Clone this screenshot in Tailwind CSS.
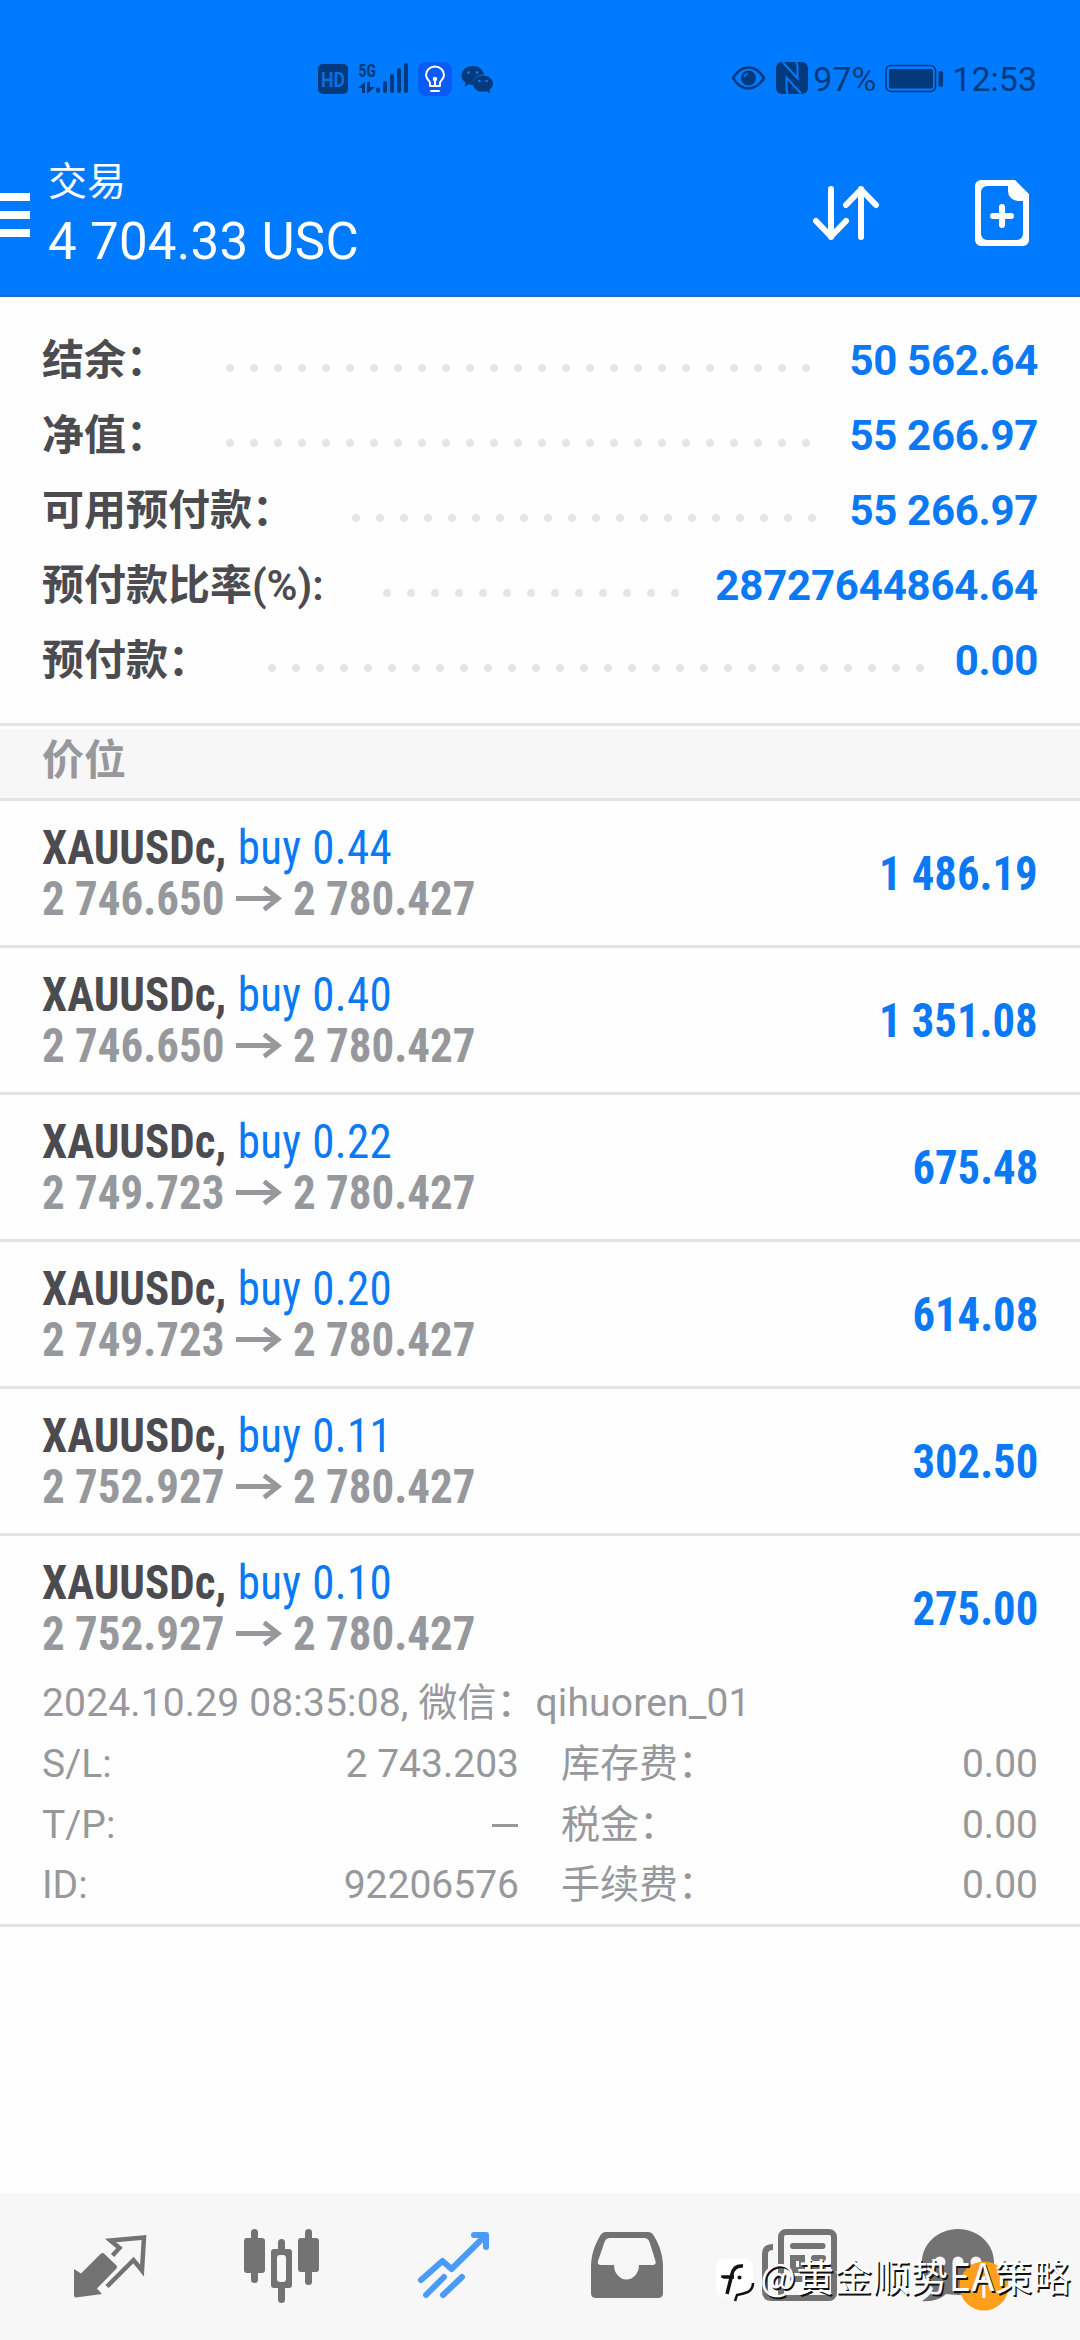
<!DOCTYPE html>
<html lang="zh-CN">
<head>
<meta charset="utf-8">
<title>交易</title>
<script src="https://cdn.jsdelivr.net/npm/@tailwindcss/browser@4"></script>
</head>
<body class="bg-white">
<div class="relative flex h-[2340px] w-[1080px] flex-col overflow-hidden bg-[#fefefe] font-['Roboto','Noto_Sans_CJK_SC',sans-serif]">

  <!-- Header -->
  <header class="h-[297px] border-b-2 border-[#1f6cbe] bg-[#007aff]">
    <div class="flex h-[158px] items-start justify-between pr-[43px] pl-[318px] text-[#043a7c]">
      <svg class="mt-[60px] h-[40px] w-[180px]" viewBox="318 60 180 40" fill="#043a7c">
        <rect x="318" y="64" width="30" height="30" rx="5"/>
        <text x="333" y="86.500" text-anchor="middle" font-family="Roboto" font-weight="700" font-size="20" textLength="24" lengthAdjust="spacingAndGlyphs" fill="#0a6fe2">HD</text>
        <text x="358.500" y="76.500" font-family="Roboto Condensed" font-weight="700" font-size="19" textLength="17.500" lengthAdjust="spacingAndGlyphs">5G</text>
        <path d="M358 88l7-6v11h-3v-5zM367 82h3v5h5l-8 7z"/>
        <g stroke="#043a7c" stroke-width="4" stroke-linecap="round"><path d="M378 89.500v1.500M385 83v8M392 76v15M399 70v21M406 65v26"/></g>
        <rect x="418" y="62" width="34" height="34" rx="8" fill="#0a5af5"/>
        <g fill="none" stroke="#fff" stroke-width="2" stroke-linecap="round" stroke-linejoin="round"><path d="M430 86v-3c0-2-4-4-4-8a9 8.500 0 0 1 18 0c0 4-4 6-4 8v3zM431 91h8M435 80v6"/></g>
        <circle cx="435" cy="79" r="2.200" fill="#fff"/>
        <path d="M473 66c-6.500 0-11.500 4.200-11.500 9.500 0 3 1.600 5.400 4.200 7.200l-1.200 3.800 4.500-2.300c1.400.3 2.700.6 4 .6-.6-6 4.600-10.600 11-10.300C483 69.500 478.500 66 473 66z"/>
        <path d="M483 75.500c-5.700 0-10 3.700-10 8.200s4.300 8 10 8c1.200 0 2.300-.2 3.400-.5l3.600 2-.8-3.300c2.400-1.700 3.800-3.700 3.800-6.200 0-4.500-4.300-8.200-10-8.200z"/>
        <g fill="#007aff"><circle cx="468.500" cy="72.500" r="1.500"/><circle cx="477" cy="72.500" r="1.500"/><circle cx="479.500" cy="81" r="1.300"/><circle cx="486.500" cy="81" r="1.300"/></g>
      </svg>
      <div class="mt-[60px] flex h-[40px] items-center">
        <svg class="h-[40px] w-[80px]" viewBox="732 60 80 40">
          <path d="M733 78c4-6.500 9.500-10.500 15.500-10.500S760 71.500 764 78c-4 6.500-9.500 10.500-15.500 10.500S737 84.500 733 78z" fill="none" stroke="#043a7c" stroke-width="2.500"/>
          <circle cx="748.500" cy="78" r="7.500" fill="#043a7c"/><path d="M744.500 77a4 4 0 0 1 3.500-3.300" fill="none" stroke="#007aff" stroke-width="1.500"/>
          <rect x="776" y="62" width="32" height="32" rx="6" fill="#043a7c"/>
          <path d="M783 62.500l14.500 16v-12q0-2.500-1.500-4.500M801 93.500l-14.500-16v12q0 2.500 1.500 4.500" fill="none" stroke="#007aff" stroke-width="2"/>
        </svg>
        <span class="mb-[2px] ml-[1px] w-[72px] text-[34px] leading-[38px]">97%</span>
        <svg class="h-[40px] w-[67px]" viewBox="885 60 67 40">
          <rect x="886" y="65.500" width="49.500" height="26" rx="5" fill="none" stroke="#043a7c" stroke-width="1.600"/>
          <rect x="889" y="69" width="44" height="19.500" rx="2" fill="#043a7c"/>
          <rect x="938.500" y="71" width="4.500" height="16" rx="2" fill="#043a7c"/>
        </svg>
        <span class="mb-[2px] text-[34px] leading-[38px]">12:53</span>
      </div>
    </div>
    <div class="flex items-start text-white">
      <svg class="mt-[35px] h-[44px] w-[30px]" viewBox="0 193 30 44" fill="#fff"><path d="M0 193h30v8H0zM0 211h30v8H0zM0 229h30v8H0z"/></svg>
      <div class="ml-[18px]">
        <div class="text-[39px] leading-[48px]">交易</div>
        <div class="mt-[6px] text-[51px] leading-[60px] tracking-[0.3px]">4 704.33 USC</div>
      </div>
      <svg class="mt-[22px] ml-auto h-[66px] w-[267px]" viewBox="813 180 267 66" fill="none" stroke="#fff" stroke-width="6" stroke-linecap="round" stroke-linejoin="round">
        <path d="M831 189v48M816 221l15 15.500L846 221M861 237v-48M846 205l15-15.500L876 205"/>
        <path d="M1002 207v18M993 216h18"/>
        <path fill="#fff" fill-rule="evenodd" stroke="none" d="M981 180h34l14 14v46a6 6 0 0 1-6 6h-42a6 6 0 0 1-6-6v-54a6 6 0 0 1 6-6zM1008 186h-21a6 6 0 0 0-6 6v42a6 6 0 0 0 6 6h30a6 6 0 0 0 6-6v-33h-5a10 10 0 0 1-10-10z"/>
      </svg>
    </div>
  </header>

  <!-- Account summary -->
  <section class="h-[426px] pt-[26px] pr-[42px] pl-[42px] text-[42px] leading-[75px] font-bold text-[#4b4b50]">
    <div class="flex h-[75px]"><span class="w-[176px]">结余：</span><span class="mt-[33px] h-[24px] w-[600px] bg-[radial-gradient(circle,#e5e5e5_3.700px,transparent_4.300px)] bg-[length:24px_24px]"></span><span class="ml-auto tracking-[-0.3px] text-[#0b79f3]">50 562.64</span></div>
    <div class="flex h-[75px]"><span class="w-[176px]">净值：</span><span class="mt-[33px] h-[24px] w-[600px] bg-[radial-gradient(circle,#e5e5e5_3.700px,transparent_4.300px)] bg-[length:24px_24px]"></span><span class="ml-auto tracking-[-0.3px] text-[#0b79f3]">55 266.97</span></div>
    <div class="flex h-[75px]"><span class="w-[302px]">可用预付款：</span><span class="mt-[33px] h-[24px] w-[480px] bg-[radial-gradient(circle,#e5e5e5_3.700px,transparent_4.300px)] bg-[length:24px_24px]"></span><span class="ml-auto tracking-[-0.3px] text-[#0b79f3]">55 266.97</span></div>
    <div class="flex h-[75px]"><span class="w-[333px]">预付款比率<span class="font-semibold">(%):</span></span><span class="mt-[33px] h-[24px] w-[312px] bg-[radial-gradient(circle,#e5e5e5_3.700px,transparent_4.300px)] bg-[length:24px_24px]"></span><span class="ml-auto tracking-[-0.2px] text-[#0b79f3]">28727644864.64</span></div>
    <div class="flex h-[75px]"><span class="w-[218px]">预付款：</span><span class="mt-[33px] h-[24px] w-[672px] bg-[radial-gradient(circle,#e5e5e5_3.700px,transparent_4.300px)] bg-[length:24px_24px]"></span><span class="ml-auto tracking-[-0.3px] text-[#0b79f3]">0.00</span></div>
  </section>

  <div class="border-y-[3px] border-[#e4e4e4] pt-[3px]">
    <div class="h-[69px] bg-[#f7f7f7] pl-[42px] text-[42px] leading-[63px] font-bold text-[#97989c]">价位</div>
  </div>

  <!-- Positions -->
  <main class="font-['Roboto_Condensed','Noto_Sans_CJK_SC',sans-serif] text-[48px] leading-[51px] font-bold text-[#97989c]">
    <div class="flex h-[147px] items-center justify-between border-b-[3px] border-[#e4e4e4] px-[42px] pt-[21px] pb-[21px]">
      <div class="origin-left scale-x-[0.937]">
        <div class="text-[#4b4b50]">XAUUSDc, <span class="ml-[1px] font-normal tracking-[0.4px] text-[#0b79f3]">buy 0.44</span></div>
        <div class="flex items-center">2 746.650<svg class="mx-[12px] h-[26px] w-[49px]" viewBox="0 0 49 26" fill="none" stroke="#97989c" stroke-width="5"><path d="M0 12.500h45M30 1.500l15 11-15 11"/></svg>2 780.427</div>
      </div>
      <div class="origin-right scale-x-93 text-[#0b79f3]">1 486.19</div>
    </div>
    <div class="flex h-[147px] items-center justify-between border-b-[3px] border-[#e4e4e4] px-[42px] pt-[21px] pb-[21px]">
      <div class="origin-left scale-x-[0.937]">
        <div class="text-[#4b4b50]">XAUUSDc, <span class="ml-[1px] font-normal tracking-[0.4px] text-[#0b79f3]">buy 0.40</span></div>
        <div class="flex items-center">2 746.650<svg class="mx-[12px] h-[26px] w-[49px]" viewBox="0 0 49 26" fill="none" stroke="#97989c" stroke-width="5"><path d="M0 12.500h45M30 1.500l15 11-15 11"/></svg>2 780.427</div>
      </div>
      <div class="origin-right scale-x-93 text-[#0b79f3]">1 351.08</div>
    </div>
    <div class="flex h-[147px] items-center justify-between border-b-[3px] border-[#e4e4e4] px-[42px] pt-[21px] pb-[21px]">
      <div class="origin-left scale-x-[0.937]">
        <div class="text-[#4b4b50]">XAUUSDc, <span class="ml-[1px] font-normal tracking-[0.4px] text-[#0b79f3]">buy 0.22</span></div>
        <div class="flex items-center">2 749.723<svg class="mx-[12px] h-[26px] w-[49px]" viewBox="0 0 49 26" fill="none" stroke="#97989c" stroke-width="5"><path d="M0 12.500h45M30 1.500l15 11-15 11"/></svg>2 780.427</div>
      </div>
      <div class="origin-right scale-x-93 text-[#0b79f3]">675.48</div>
    </div>
    <div class="flex h-[147px] items-center justify-between border-b-[3px] border-[#e4e4e4] px-[42px] pt-[21px] pb-[21px]">
      <div class="origin-left scale-x-[0.937]">
        <div class="text-[#4b4b50]">XAUUSDc, <span class="ml-[1px] font-normal tracking-[0.4px] text-[#0b79f3]">buy 0.20</span></div>
        <div class="flex items-center">2 749.723<svg class="mx-[12px] h-[26px] w-[49px]" viewBox="0 0 49 26" fill="none" stroke="#97989c" stroke-width="5"><path d="M0 12.500h45M30 1.500l15 11-15 11"/></svg>2 780.427</div>
      </div>
      <div class="origin-right scale-x-93 text-[#0b79f3]">614.08</div>
    </div>
    <div class="flex h-[147px] items-center justify-between border-b-[3px] border-[#e4e4e4] px-[42px] pt-[21px] pb-[21px]">
      <div class="origin-left scale-x-[0.937]">
        <div class="text-[#4b4b50]">XAUUSDc, <span class="ml-[1px] font-normal tracking-[0.4px] text-[#0b79f3]">buy 0.11</span></div>
        <div class="flex items-center">2 752.927<svg class="mx-[12px] h-[26px] w-[49px]" viewBox="0 0 49 26" fill="none" stroke="#97989c" stroke-width="5"><path d="M0 12.500h45M30 1.500l15 11-15 11"/></svg>2 780.427</div>
      </div>
      <div class="origin-right scale-x-93 text-[#0b79f3]">302.50</div>
    </div>
    <div class="flex h-[144px] items-center justify-between px-[42px] pt-[21px] pb-[21px]">
      <div class="origin-left scale-x-[0.937]">
        <div class="text-[#4b4b50]">XAUUSDc, <span class="ml-[1px] font-normal tracking-[0.4px] text-[#0b79f3]">buy 0.10</span></div>
        <div class="flex items-center">2 752.927<svg class="mx-[12px] h-[26px] w-[49px]" viewBox="0 0 49 26" fill="none" stroke="#97989c" stroke-width="5"><path d="M0 12.500h45M30 1.500l15 11-15 11"/></svg>2 780.427</div>
      </div>
      <div class="origin-right scale-x-93 text-[#0b79f3]">275.00</div>
    </div>
    <div class="border-b-[3px] border-[#e4e4e4] px-[42px] pt-[1px] pb-[8px] font-['Roboto','Noto_Sans_CJK_SC',sans-serif] text-[39px] font-normal">
      <div class="leading-[44px] whitespace-nowrap"><span class="tracking-[0.15px]">2024.10.29 08:35:08, </span>微信：<span class="tracking-[0.15px]">qihuoren_01</span></div>
      <div class="mt-[9px] grid grid-cols-[477px_477px] gap-x-[42px] leading-[60.500px]">
        <div class="flex justify-between"><span>S/L:</span><span>2 743.203</span></div>
        <div class="flex justify-between"><span>库存费：</span><span>0.00</span></div>
        <div class="flex justify-between"><span>T/P:</span><span class="mt-[29px] mr-[1px] h-[3px] w-[26px] bg-[#97989c]"></span></div>
        <div class="flex justify-between"><span>税金：</span><span>0.00</span></div>
        <div class="flex justify-between"><span>ID:</span><span>92206576</span></div>
        <div class="flex justify-between"><span>手续费：</span><span>0.00</span></div>
      </div>
    </div>
  </main>

  <!-- Tab bar -->
  <nav class="mt-auto grid h-[147px] grid-cols-[repeat(6,172px)] bg-[#f7f7f7] pl-[24px]">
    <svg class="h-[147px] w-[172px]" viewBox="24 2193 172 147" fill="#737373">
      <path d="M74 2269l7 4.500 19.500-19.500q2-2 4 0l11.500 11q2 2 0 4l-19 19.500 5 5.500-26 3.500q-2 0-2-2z"/>
      <path d="M112.500 2255.500l7-7.500-9-7.500 33.500-3-2 33-8.500-10.500L107 2286.500" fill="none" stroke="#737373" stroke-width="4.500"/>
    </svg>
    <svg class="h-[147px] w-[172px]" viewBox="196 2193 172 147" fill="#737373">
      <rect x="244" y="2238" width="21" height="35" rx="3"/><rect x="251" y="2229" width="7" height="54" rx="3.500"/>
      <rect x="298" y="2238" width="21" height="34" rx="3"/><rect x="305" y="2229" width="7" height="56" rx="3.500"/>
      <rect x="278" y="2239" width="7" height="64" rx="3.500"/><rect x="271" y="2249" width="21" height="39" rx="3"/>
      <rect x="277" y="2255" width="9" height="27" rx="3" fill="#f7f7f7"/>
    </svg>
    <svg class="h-[147px] w-[172px]" viewBox="368 2193 172 147" fill="none" stroke="#4a9bf5" stroke-width="6" stroke-linecap="round" stroke-linejoin="round">
      <path d="M421 2280l21.500-19 9 8 34-33.500M474 2235h12v12"/>
      <path d="M426 2295l18-18M443 2295l19-18" />
    </svg>
    <svg class="h-[147px] w-[172px]" viewBox="540 2193 172 147" fill="#737373">
      <path d="M606 2232h42q4 0 6 4c6 10 9 20 9 31v26q0 5-5 5h-62q-5 0-5-5v-26c0-11 3-21 9-31q2-4 6-4z"/>
      <path d="M610 2238h34q4 0 5.500 4l6 19q1 4-3 4H639a12.500 14.500 0 0 1-25 0h-13q-4 0-3-4l6.500-19q1.500-4 5.500-4z" fill="#f7f7f7"/>
    </svg>
    <svg class="h-[147px] w-[172px]" viewBox="712 2193 172 147" fill="none" stroke="#737373" stroke-width="6">
      <rect x="781" y="2232" width="53" height="66" rx="5"/>
      <path d="M773 2247q-8 0-8 7v37q0 7 7 7h12"/>
      <path d="M793 2246h29.500M793 2279h29.500" stroke-linecap="round"/>
      <path d="M793 2270v-12h9v12zM814 2258h9M814 2269h9" stroke-linecap="round"/>
    </svg>
    <svg class="h-[147px] w-[172px]" viewBox="884 2193 172 147" fill="#737373">
      <path d="M958 2229c20 0 36 15 36 33s-15 33-35 33c-6 0-10-1-13-1-5 5-14 8-24 7 6-4 10-8 11-13-7-6-11-15-11-26 0-18 16-33 36-33z"/>
      <g fill="#f7f7f7"><circle cx="940" cy="2262" r="5.500"/><circle cx="958" cy="2262" r="5.500"/><circle cx="976" cy="2262" r="5.500"/></g>
      <circle cx="984" cy="2286" r="24.500" fill="#ff9f1c"/>
      <text x="983" y="2298" text-anchor="middle" font-family="Roboto" font-size="32" fill="#fff">1</text>
    </svg>
  </nav>

  <!-- Watermark -->
  <div class="absolute top-[2247px] right-[9px] flex items-center gap-[5px]">
    <svg class="mt-[8px] h-[48px] w-[40px]" viewBox="714 2257 40 48">
      <path d="M725 2260.500h17q10 0 10 10v17q0 10-7 10.500-5 .5-9 4.500l-3-4h-8q-10 0-10-10v-18q0-10 10-10z" fill="#fff"/>
      <path d="M742 2268q-9-1-11 8l-5 20M722 2280v-1h11" fill="none" stroke="#111" stroke-width="3.500"/><circle cx="738.500" cy="2279.500" r="2" fill="#111"/>
      <path d="M734 2303l2-6q6-1 11-3 5-3 5-9" fill="none" stroke="#111" stroke-width="2.500"/>
    </svg>
    <span class="font-['Noto_Sans_CJK_SC',sans-serif] text-[37.500px] leading-[46px] tracking-[0.6px] whitespace-nowrap text-white [text-shadow:1.5px_1.5px_0.5px_#111]">@黄金顺势EA策略</span>
  </div>
</div>
</body>
</html>
